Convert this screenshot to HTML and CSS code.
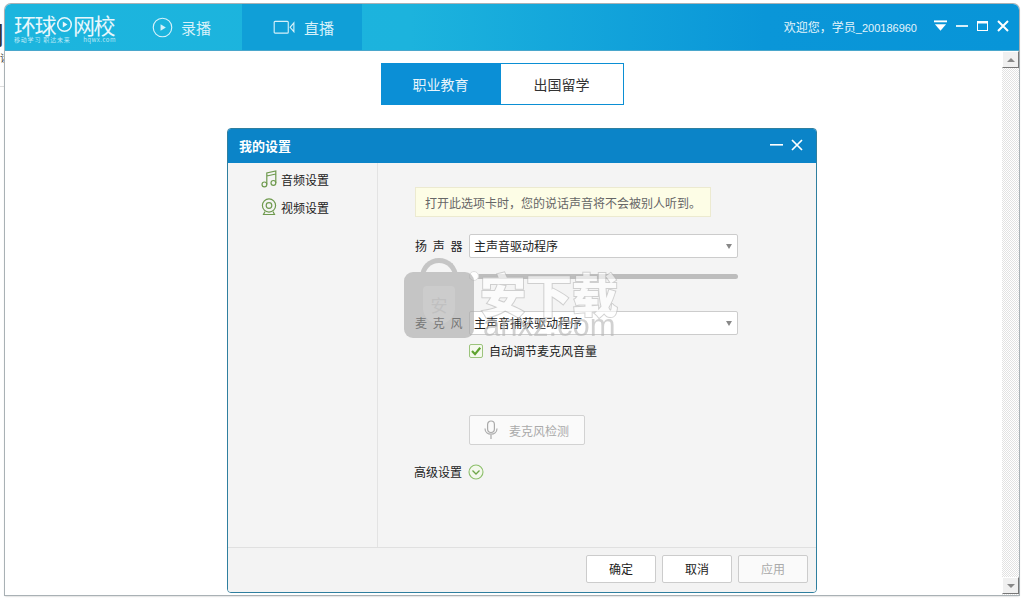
FILE: index.html
```html
<!DOCTYPE html>
<html lang="zh-CN">
<head>
<meta charset="utf-8">
<title>环球网校</title>
<link rel="stylesheet" href="styles.css">
</head>
<body>
<div class="behind-title">门</div>
<div class="behind-small">读</div>
<div class="behind-line"></div>
<div class="app">
  <header class="topbar">
    <div class="logo">
      <div class="logo-main"><span>环球</span><svg class="logo-play" viewBox="0 0 20 20" width="17" height="17"><circle cx="10" cy="10" r="8" fill="none" stroke="#e8f7fc" stroke-width="1.8"/><path d="M8 6.5 13.5 10 8 13.5z" fill="#e8f7fc"/></svg><span>网校</span></div>
      <div class="logo-sub"><span>移动学习 职达未来</span><span class="logo-url">hqwx.com</span></div>
    </div>
    <nav class="nav">
      <div class="nav-tab nav-rec">
        <svg viewBox="0 0 22 22" width="21" height="21"><circle cx="11" cy="11" r="9.7" fill="none" stroke="#d6f1fa" stroke-width="1.2"/><path d="M9 7.5 14.5 11 9 14.5z" fill="#d6f1fa"/></svg>
        <span>录播</span>
      </div>
      <div class="nav-tab nav-live">
        <svg viewBox="0 0 24 16" width="23" height="15"><rect x="1" y="1.5" width="15" height="12.5" rx="1" fill="none" stroke="#d6f1fa" stroke-width="1.2"/><path d="M22 3 18 7.8 22 12.5z" fill="none" stroke="#d6f1fa" stroke-width="1.2"/></svg>
        <span>直播</span>
      </div>
    </nav>
    <div class="userbar">
      <span class="welcome">欢迎您，学员<span class="welcome-id">_200186960</span></span>
      <div class="win-btns">
        <svg viewBox="0 0 14 12" width="13" height="12"><rect x="0" y="0" width="14" height="2" fill="#fff"/><path d="M1 4h12L7 11z" fill="#fff"/></svg>
        <svg viewBox="0 0 13 12" width="12" height="12"><rect x="0" y="5" width="13" height="2" fill="#e8f6fc"/></svg>
        <svg viewBox="0 0 11 12" width="11" height="12"><rect x="0.5" y="1.5" width="10" height="9" fill="none" stroke="#fff"/><rect x="0" y="1" width="11" height="2.5" fill="#fff"/></svg>
        <svg viewBox="0 0 12 12" width="12" height="12"><path d="M1 1 11 11M11 1 1 11" stroke="#fff" stroke-width="2" fill="none"/></svg>
      </div>
    </div>
  </header>
  <div class="body">
    <main class="content">
      <div class="switch">
        <div class="switch-item switch-on">职业教育</div>
        <div class="switch-item">出国留学</div>
      </div>
      <section class="dialog">
        <div class="dialog-head">
          <span class="dialog-title">我的设置</span>
          <div class="dialog-btns">
            <svg viewBox="0 0 13 11" width="13" height="11"><rect x="0" y="4" width="13" height="1.6" fill="#fff"/></svg>
            <svg viewBox="0 0 12 12" width="12" height="12"><path d="M1 1 11 11M11 1 1 11" stroke="#fff" stroke-width="1.7" fill="none"/></svg>
          </div>
        </div>
        <div class="dialog-main">
          <aside class="side">
            <div class="side-item">
              <svg viewBox="0 0 16 18" width="16" height="18"><g fill="none" stroke="#6f9a4e" stroke-width="1.2"><circle cx="3.4" cy="14.4" r="2.4"/><circle cx="12.4" cy="12.9" r="2.4"/><path d="M5.8 14.4V3L14.8 1V12.9M5.8 6 14.8 4"/></g></svg>
              <span>音频设置</span>
            </div>
            <div class="side-item">
              <svg viewBox="0 0 16 18" width="16" height="18"><g fill="none" stroke="#6f9a4e" stroke-width="1.2"><circle cx="8" cy="7.5" r="6.6"/><circle cx="8" cy="7.5" r="2.8"/><path d="M4 13.5 2.5 16.5H13.5L12 13.5"/></g></svg>
              <span>视频设置</span>
            </div>
          </aside>
          <div class="panel">
            <div class="notice">打开此选项卡时，您的说话声音将不会被别人听到。</div>
            <div class="field field-speaker">
              <span class="field-label">扬 声 器</span>
              <div class="select"><span>主声音驱动程序</span><i class="caret"></i></div>
            </div>
            <div class="slider"><i class="knob"></i></div>
            <div class="field field-mic">
              <span class="field-label">麦 克 风</span>
              <div class="select"><span>主声音捕获驱动程序</span><i class="caret"></i></div>
            </div>
            <label class="check">
              <span class="checkbox"><svg viewBox="0 0 12 12" width="12" height="12"><path d="M2 6 5 9.2 10.2 2.8" fill="none" stroke="#5ea32e" stroke-width="2.2"/></svg></span>
              <span>自动调节麦克风音量</span>
            </label>
            <div class="mic-btn">
              <svg viewBox="0 0 14 20" width="14" height="20"><g fill="none" stroke="#aaa" stroke-width="1.2"><rect x="3.6" y="1" width="6.8" height="11.5" rx="3.4"/><path d="M1 8.5C1 16 13 16 13 8.5M7 15V19"/></g></svg>
              <span>麦克风检测</span>
            </div>
            <div class="advanced">
              <span>高级设置</span>
              <svg viewBox="0 0 16 16" width="16" height="16"><circle cx="8" cy="8" r="7" fill="#f3f8ec" stroke="#8cbf6a" stroke-width="1.1"/><path d="M4.5 6.5 8 10 11.5 6.5" fill="none" stroke="#6ea548" stroke-width="1.3"/></svg>
            </div>
          </div>
        </div>
        <footer class="dialog-foot">
          <div class="foot-btn">确定</div>
          <div class="foot-btn">取消</div>
          <div class="foot-btn foot-off">应用</div>
        </footer>
      </section>
    </main>
    <div class="scrollbar">
      <div class="arrow"><i class="arrow-up"></i></div>
      <div class="arrow"><i class="arrow-down"></i></div>
    </div>
  </div>
</div>
<div class="watermark">
  <div class="wm-lock">
    <i class="wm-shackle"></i>
    <div class="wm-body"><span class="wm-shield">安</span></div>
  </div>
  <div class="wm-text">
    <div class="wm-cn">安下载</div>
    <div class="wm-en">anxz.com</div>
  </div>
</div>
</body>
</html>
```

FILE: styles.css
```css
* { box-sizing: border-box; }
html, body { margin: 0; height: 100%; overflow: hidden; }
body {
  position: relative;
  width: 1024px;
  height: 600px;
  background: #fff;
  font: 12px "Noto Sans CJK SC", "Liberation Sans", sans-serif;
  color: #222;
}
.behind-title { position: absolute; left: -22px; top: 19px; font-size: 26px; line-height: 30px; color: #333; }
.behind-small { position: absolute; left: 0; top: 52px; font-size: 10px; line-height: 12px; color: #444; }
.behind-line { position: absolute; left: 0; top: 86px; width: 4px; height: 1px; background: #ddd; }

.app {
  position: absolute;
  left: 5px;
  top: 4px;
  width: 1014px;
  height: 591px;
  display: flex;
  flex-direction: column;
  background: #fff;
  border-radius: 6px 6px 0 0;
  box-shadow: 0 0 0 1px #a9b1b5, 0 1px 2px rgba(0,0,0,.35);
  overflow: hidden;
}
.topbar {
  flex: none;
  height: 47px;
  display: flex;
  align-items: stretch;
  background: linear-gradient(90deg, #1cb5de 0, #1cb3dd 40%, #0a96d8 75%, #0895d8 100%);
  border-bottom: 1px solid #4aa7cc;
  color: #fff;
}
.logo { width: 123px; padding: 8px 0 0 9px; color: #e8f7fc; }
.logo-main { display: flex; align-items: center; height: 24px; font-size: 22px; line-height: 24px; font-weight: 400; letter-spacing: -1.5px; white-space: nowrap; }
.logo-play { margin: 0 0 0 1px; flex: none; }
.logo-sub { display: flex; justify-content: space-between; width: 102px; font-size: 6px; line-height: 8px; letter-spacing: .8px; color: #bfe9f6; white-space: nowrap; }
.logo-url { letter-spacing: .5px; }
.nav { display: flex; }
.nav-tab { display: flex; align-items: center; font-size: 15px; color: #d6f1fa; height: 46px; }
.nav-rec { width: 114px; padding-left: 24px; gap: 8px; }
.nav-live { width: 120px; padding-left: 31px; gap: 8px; background: #109fd7; }
.userbar { margin-left: auto; display: flex; align-items: center; padding: 0 10px 2px 0; }
.welcome { font-size: 12px; color: #e3f4fb; margin-right: 17px; }
.welcome-id { font: 11px "Liberation Sans", sans-serif; }
.win-btns { display: flex; align-items: center; gap: 9px; }

.body { flex: 1; display: flex; min-height: 0; }
.content { flex: 1; display: flex; flex-direction: column; align-items: center; padding: 12px 0 0 0; min-width: 0; }
.switch { display: flex; height: 42px; margin-right: 3px; }
.switch-item {
  width: 123px;
  display: flex;
  align-items: center;
  justify-content: center;
  font-size: 14px;
  color: #333;
  border: 1px solid #0b8fd4;
  border-left: 0;
}
.switch-on { width: 120px; background: #0b8fd6; color: #e8f5fc; border: 0; }

.dialog {
  width: 590px;
  height: 465px;
  margin-top: 23px;
  margin-left: 37px;
  display: flex;
  flex-direction: column;
  background: #f4f4f4;
  border: 1px solid #2f7f9f;
  border-radius: 4px;
  overflow: hidden;
}
.dialog-head {
  flex: none;
  height: 34px;
  display: flex;
  align-items: center;
  justify-content: space-between;
  padding: 0 13px 0 11px;
  background: #0b84c8;
  color: #fff;
}
.dialog-title { font-size: 13px; font-weight: 700; margin-bottom: 2px; }
.dialog-btns { display: flex; align-items: center; gap: 8px; margin-bottom: 2px; }
.dialog-main { flex: 1; display: flex; min-height: 0; }
.side { width: 150px; flex: none; border-right: 1px solid #e3e3e3; padding: 7px 0 0 33px; }
.side-item { display: flex; align-items: center; gap: 4px; height: 18px; margin-bottom: 10px; color: #222; }
.panel { flex: 1; padding: 24px 0 0 37px; }
.notice {
  display: flex;
  align-items: center;
  width: 296px;
  height: 30px;
  padding-left: 9px;
  background: #fdfde6;
  border: 1px solid #ecead0;
  font-size: 12px;
  color: #666;
  white-space: nowrap;
}
.field { display: flex; align-items: center; }
.field-speaker { margin-top: 17px; }
.field-mic { margin-top: 32px; }
.field-label { width: 54px; flex: none; white-space: nowrap; color: #222; word-spacing: 3px; padding-bottom: 2px; }
.select {
  position: relative;
  display: flex;
  align-items: center;
  width: 269px;
  height: 24px;
  padding: 0 0 2px 4px;
  background: #fff;
  border: 1px solid #ccc;
  border-radius: 2px;
  font-size: 12px;
  color: #222;
}
.caret {
  position: absolute;
  right: 5px;
  top: 9px;
  border-style: solid;
  border-width: 5px 3.5px 0;
  border-color: #888 transparent transparent;
}
.slider {
  position: relative;
  width: 269px;
  height: 5px;
  margin: 16px 0 0 54px;
  background: #bdbdbd;
  border-radius: 3px;
}
.knob {
  position: absolute;
  left: 0;
  top: -3px;
  width: 10px;
  height: 10px;
  background: #fff;
  border: 1px solid #ddd;
  border-radius: 50%;
}
.check { display: flex; align-items: center; gap: 6px; margin: 7px 0 0 54px; font-size: 12px; color: #222; }
.checkbox {
  width: 14px;
  height: 14px;
  display: flex;
  align-items: center;
  justify-content: center;
  background: #f5f9ee;
  border: 1px solid #9cc47c;
  border-radius: 2px;
}
.mic-btn {
  display: flex;
  align-items: center;
  gap: 11px;
  width: 116px;
  height: 30px;
  margin: 56px 0 0 54px;
  padding-left: 14px;
  background: #fafafa;
  border: 1px solid #d2d2d2;
  border-radius: 2px;
  font-size: 12px;
  color: #aaa;
  white-space: nowrap;
}
.advanced { display: flex; align-items: center; gap: 6px; margin-top: 18px; margin-left: -1px; color: #222; }

.dialog-foot {
  flex: none;
  height: 45px;
  display: flex;
  justify-content: flex-end;
  gap: 6px;
  padding: 7px 8px 0 0;
  background: #f3f3f3;
  border-top: 1px solid #e0e0e0;
}
.foot-btn {
  width: 70px;
  height: 28px;
  display: flex;
  align-items: center;
  justify-content: center;
  padding-bottom: 1px;
  background: #fff;
  border: 1px solid #ccc;
  border-radius: 2px;
  font-size: 12px;
  color: #222;
}
.foot-off { color: #aaa; background: #fafafa; }

.scrollbar {
  flex: none;
  width: 17px;
  display: flex;
  flex-direction: column;
  justify-content: space-between;
  background: repeating-conic-gradient(#e2e2e2 0 25%, #fff 0 50%) 0 0 / 2px 2px;
  padding-bottom: 1px;
}
.arrow {
  height: 17px;
  display: flex;
  align-items: center;
  justify-content: center;
  background: #f0f0f0;
  border: 1px solid;
  border-color: #fff #777 #777 #fff;
}
.arrow-up { border-style: solid; border-width: 0 4px 4px; border-color: transparent transparent #888; }
.arrow-down { border-style: solid; border-width: 4px 4px 0; border-color: #888 transparent transparent; }

.watermark {
  position: absolute;
  left: 404px;
  top: 258px;
  display: flex;
  gap: 6px;
  opacity: .62;
  pointer-events: none;
}
.wm-lock { position: relative; width: 70px; height: 80px; }
.wm-shackle {
  position: absolute;
  left: 16px;
  top: 0;
  width: 38px;
  height: 30px;
  border: 5px solid #a8a8a8;
  border-bottom: 0;
  border-radius: 19px 19px 0 0;
}
.wm-body {
  position: absolute;
  left: 0;
  top: 14px;
  width: 70px;
  height: 66px;
  display: flex;
  align-items: center;
  justify-content: center;
  background: #a8a8a8;
  border-radius: 9px;
}
.wm-shield {
  display: flex;
  align-items: center;
  justify-content: center;
  width: 32px;
  height: 38px;
  background: #b4b4b4;
  border-radius: 4px 4px 16px 16px;
  font-size: 17px;
  line-height: 38px;
  color: #a0a0a0;
}
.wm-text { width: 144px; }
.wm-cn {
  font-size: 46px;
  line-height: 52px;
  margin-top: 8px;
  font-weight: 900;
  color: #fff;
  -webkit-text-stroke: 2px #b8b8b8;
  paint-order: stroke fill;
  white-space: nowrap;
}
.wm-en { font: 31px/28px "Liberation Sans", sans-serif; color: #b5b5b5; margin-top: -6px; padding-left: 3px; white-space: nowrap; }
```
